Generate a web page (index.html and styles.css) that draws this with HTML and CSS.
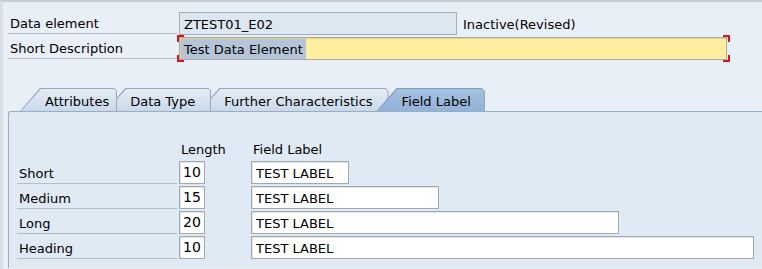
FILE: index.html
```html
<!DOCTYPE html>
<html lang="en">
<head>
    <meta charset="UTF-8">
    <meta name="viewport" content="width=device-width, initial-scale=1.0">
    <title>Data Element - Field Label</title>
    <link rel="stylesheet" href="styles.css">
</head>
<body>

<div class="screen">
    <div class="head">
        <div class="row">
            <span class="lbl">Data element</span>
            <span class="field field-ro w-name">ZTEST01_E02</span>
            <span class="status">Inactive(Revised)</span>
        </div>
        <div class="row">
            <span class="lbl">Short Description</span>
            <span class="focus">
                <span class="field field-req w-desc"><span class="sel">Test Data Element</span></span>
            </span>
        </div>
    </div>

    <div class="tabs">
        <div class="tab tab-1"><span>Attributes</span></div>
        <div class="tab tab-2"><span>Data Type</span></div>
        <div class="tab tab-3"><span>Further Characteristics</span></div>
        <div class="tab tab-4 active"><span>Field Label</span></div>
    </div>

    <div class="panel">
        <div class="labels">
            <div class="line line-head">
                <span class="lbl-row blank"></span>
                <span class="col-head col-len">Length</span>
                <span class="col-head">Field Label</span>
            </div>
            <div class="line">
                <span class="lbl-row">Short</span>
                <span class="field field-in len">10</span>
                <span class="field field-in w-short">TEST LABEL</span>
            </div>
            <div class="line">
                <span class="lbl-row">Medium</span>
                <span class="field field-in len">15</span>
                <span class="field field-in w-medium">TEST LABEL</span>
            </div>
            <div class="line">
                <span class="lbl-row">Long</span>
                <span class="field field-in len">20</span>
                <span class="field field-in w-long">TEST LABEL</span>
            </div>
            <div class="line">
                <span class="lbl-row">Heading</span>
                <span class="field field-in len">10</span>
                <span class="field field-in w-heading">TEST LABEL</span>
            </div>
        </div>
    </div>
</div>

</body>
</html>
```

FILE: styles.css
```css
body {
    margin: 0;
    padding: 0;
    font-family: "DejaVu Sans", Verdana, sans-serif;
    font-size: 13px;
    color: #000;
    background-color: #e9eff6;
    overflow: hidden;
}

.screen {
    border-top: 2px solid #c4cbd3;
    border-left: 3px solid #d8dfe7;
    padding-left: 5px;
    height: 267px;
}

/* header fields */
.head {
    padding-top: 10px;
}

.row {
    display: flex;
    align-items: flex-start;
    height: 23px;
}

.row + .row {
    margin-top: 2px;
}

.lbl {
    box-sizing: border-box;
    width: 169px;
    height: 22px;
    padding: 3px 0 0 2px;
    line-height: 18px;
    margin-right: 2px;
    border-bottom: 1px solid #b6bdc5;
}

.field {
    box-sizing: border-box;
    display: block;
    height: 23px;
    padding: 2px 4px 0;
    line-height: 19px;
    border: 1px solid #a6aeb7;
    white-space: nowrap;
}

.field-ro {
    background-color: #dde7f1;
}

.w-name {
    width: 278px;
}

.status {
    margin-left: 6px;
    padding-top: 3px;
    line-height: 20px;
}

/* red corner marks around the focused field */
.focus {
    position: relative;
    display: block;
}

.focus::before,
.focus::after {
    content: "";
    position: absolute;
    top: -2px;
    width: 7px;
    height: 27px;
    background-repeat: no-repeat;
    background-image:
        linear-gradient(#d9121b, #d9121b),
        linear-gradient(#d9121b, #d9121b),
        linear-gradient(#d9121b, #d9121b),
        linear-gradient(#d9121b, #d9121b);
    background-size: 7px 2px, 2px 7px, 7px 2px, 2px 7px;
}

.focus::before {
    left: -2px;
    background-position: left top, left top, left bottom, left bottom;
}

.focus::after {
    right: -3px;
    background-position: right top, right top, right bottom, right bottom;
}

.field-req {
    background-color: #ffeda0;
    border-color: #aaaaaa;
    box-shadow: inset 1px 1px 0 #e6d27e;
    padding: 1px 0 0 1px;
}

.w-desc {
    width: 548px;
}

.sel {
    display: inline-block;
    background-color: #b4c5da;
    padding: 1px 3px 0;
    line-height: 19px;
}

/* tab strip */
.tabs {
    display: flex;
    margin-top: 28px;
    padding-left: 12px;
    height: 23px;
}

.tab {
    position: relative;
    height: 23px;
    background-color: #93a9c5;
    clip-path: polygon(20px 0, calc(100% - 3px) 0, 100% 3px, 100% 100%, 0 100%);
}

.tab + .tab {
    margin-left: -12px;
}

.tab span {
    box-sizing: border-box;
    display: block;
    height: 22px;
    margin: 1px 1px 0 1px;
    padding: 3px 15px 0 24px;
    line-height: 19px;
    white-space: nowrap;
    background: linear-gradient(#e4ecf4, #cad9e9);
    clip-path: polygon(20px 0, calc(100% - 2px) 0, 100% 2px, 100% 100%, 0 100%);
}

.tab-1 { z-index: 4; }
.tab-1 span { padding-right: 7px; }
.tab-2 { z-index: 3; }
.tab-3 { z-index: 2; }
.tab-4 { z-index: 5; }

.tab.active {
    background-color: #7f9cc2;
}

.tab.active span {
    background: linear-gradient(#a6c1e1, #93b2d8);
    padding-right: 13px;
}

/* field label panel */
.panel {
    border: 1px solid #97adc9;
    border-right: none;
    border-bottom: none;
    border-top-left-radius: 3px;
    background-color: #dfeaf4;
    padding: 25px 0 0 8px;
    height: 131px;
}

.line {
    display: flex;
    align-items: flex-start;
    height: 23px;
    margin-bottom: 2px;
}

.line-head {
    height: 22px;
}

.lbl-row {
    box-sizing: border-box;
    width: 160px;
    height: 23px;
    padding: 3px 0 0 2px;
    line-height: 19px;
    margin-right: 2px;
    border-bottom: 1px solid #b4bcc6;
}

.lbl-row.blank {
    border-bottom: none;
}

.col-head {
    padding: 3px 0 0 2px;
    line-height: 19px;
}

.col-len {
    width: 70px;
}

.field-in {
    background-color: #fff;
    border-color: #a2a8af;
    box-shadow: inset 1px 1px 0 #e4e7ea;
}

.len {
    width: 26px;
    padding: 1px 2px 0 3px;
    font-size: 14px;
    margin-right: 46px;
}

.w-short { width: 98px; }
.w-medium { width: 188px; }
.w-long { width: 368px; }
.w-heading { width: 503px; }
```
